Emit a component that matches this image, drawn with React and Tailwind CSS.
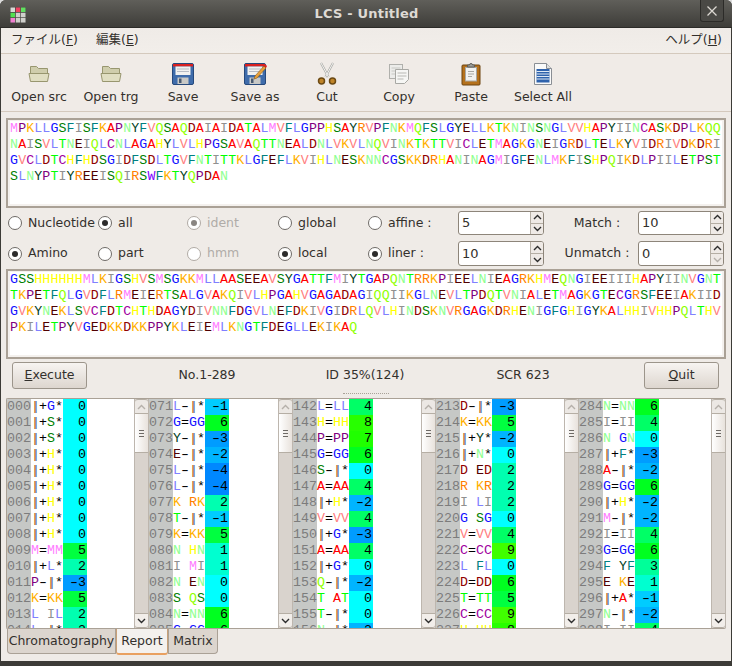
import React from "react";

const AA = {
  A: "text-[#ff0000]", C: "text-[#a000a0]", D: "text-[#900000]", E: "text-[#500000]",
  F: "text-[#008080]", G: "text-[#1010ff]", H: "text-[#ffff00]", I: "text-[#909090]",
  K: "text-[#ffb000]", L: "text-[#8080ff]", M: "text-[#ff80ff]", N: "text-[#90ff90]",
  P: "text-[#800080]", Q: "text-[#90ff00]", R: "text-[#ff8000]", S: "text-[#008000]",
  T: "text-[#00ff00]", V: "text-[#ff8080]", W: "text-[#8000ff]", Y: "text-[#004020]",
};

const SCORE = {
  "-4": "bg-[#0088ff]", "-3": "bg-[#009cff]", "-2": "bg-[#00b4ff]", "-1": "bg-[#00ccff]",
  0: "bg-[#00ffff]", 1: "bg-[#00ffd0]", 2: "bg-[#00ffb0]", 3: "bg-[#00ff99]", 4: "bg-[#00ff66]",
  5: "bg-[#00ff40]", 6: "bg-[#00ff20]", 7: "bg-[#20ff00]", 8: "bg-[#28ff00]", 9: "bg-[#40ff00]",
};

const SRC = [
  "MPKLLGSFISFKAPNYFVQSAQDAIAIDATALMVFLGPPHSAYRVPFNKMQFSLGYELLKTKNINSNGLVVHAPYIINCASKDPLKQQ",
  "NAISVLTNEIQLCNLAGAHYLVLHPGSAVAQTTNEALDNLVKVLNQVINKTKTTVICLETMAGKGNEIGRDLTELKYVIDRIVDKDRI",
  "GVCLDTCHFHDSGIDFSDLTGVFNTITTKLGFEFLKVIHLNESKNNCGSKKDRHANINAGMIGFENLMKFISHPQIKDLPIILETPST",
  "SLNYPTIYREEISQIRSWFKTYQPDAN",
];

const TRG = [
  "GSSHHHHHHMLKIGSHVSMSGKKMLLAASEEAVSYGATTFMIYTGAPQNTRRKPIEELNIEAGRKHMEQNGIEEIIIHAPYIINVGNT",
  "TKPETFQLGVDFLRMEIERTSALGVAKQIVLHPGAHVGAGADAGIQQIIKGLNEVLTPDQTVNIALETMAGKGTECGRSFEEIAKIID",
  "GVKYNEKLSVCFDTCHTHDAGYDIVNNFDGVLNEFDKIVGIDRLQVLHINDSKNVRGAGKDRHENIGFGHIGYKALHHIVHHPQLTHV",
  "PKILETPYVGEDKKDKKPPYKLEIEMLKNGTFDEGLLEKIKAQ",
];

const PANES = [
  { start: 0, w: "w-[142px]", rows: [["|+G*", 0], ["|+S*", 0], ["|+S*", 0], ["|+H*", 0], ["|+H*", 0], ["|+H*", 0], ["|+H*", 0], ["|+H*", 0], ["|+H*", 0], ["M=MM", 5], ["|+L*", 2], ["P-|*", -3], ["K=KK", 5], ["L IL", 2], ["L-|*", 2]] },
  { start: 71, w: "w-[144px]", rows: [["L-|*", -1], ["G=GG", 6], ["Y-|*", -3], ["E-|*", -2], ["L-|*", -4], ["L-|*", -4], ["K RK", 2], ["T-|*", -1], ["K=KK", 5], ["N HN", 1], ["I MI", 1], ["N EN", 0], ["S QS", 0], ["N=NN", 6], ["G=GG", 6]] },
  { start: 142, w: "w-[143px]", rows: [["L=LL", 4], ["H=HH", 8], ["P=PP", 7], ["G=GG", 6], ["S-|*", 0], ["A=AA", 4], ["|+H*", -2], ["V=VV", 4], ["|+G*", -3], ["A=AA", 4], ["|+G*", 0], ["Q-|*", -2], ["T AT", 0], ["T-|*", 0], ["N-|*", -2]] },
  { start: 213, w: "w-[143px]", rows: [["D-|*", -3], ["K=KK", 5], ["|+Y*", -2], ["|+N*", 0], ["D ED", 2], ["R KR", 2], ["I LI", 2], ["G SG", 0], ["V=VV", 4], ["C=CC", 9], ["L FL", 0], ["D=DD", 6], ["T=TT", 5], ["C=CC", 9], ["H=HH", 8]] },
  { start: 284, w: "flex-1", rows: [["N=NN", 6], ["I=II", 4], ["N GN", 0], ["|+F*", -3], ["A-|*", -2], ["G=GG", 6], ["|+H*", -2], ["M-|*", -2], ["I=II", 4], ["G=GG", 6], ["F YF", 3], ["E KE", 1], ["|+A*", -1], ["N-|*", -2], ["I=II", 4]] },
];

const MONO = "font-['Liberation_Mono',monospace] text-[13.3px]";

const Cell = ({ ch, w }) => {
  if (ch === "|") {
    return <span className={`inline-block text-center ${w} text-[#b4641e] [text-shadow:1px_0_0_#4a78a8]`}>{ch}</span>;
  }
  if (ch === "-") {
    return <span className={`inline-block text-center ${w} text-black scale-x-[1.5]`}>{ch}</span>;
  }
  return <span className={`inline-block text-center ${w} ${AA[ch] || "text-black"}`}>{ch}</span>;
};

const SeqBox = ({ lines }) => (
  <div className="ml-[5px] w-[720px] h-[90px] border-2 border-[#aaa196] bg-[#f4f1ee] px-[2px] pt-px pb-[2px]">
    <div className={`h-full bg-white ${MONO}`}>
      {lines.map((line, i) => (
        <div key={i} className="h-[16px] leading-[16px] whitespace-nowrap">
          {line.split("").map((ch, j) => <Cell key={j} ch={ch} w="w-[8.08px]" />)}
        </div>
      ))}
    </div>
  </div>
);

const Radio = ({ on, off, label, w }) => (
  <label className={`flex items-center gap-[6px] ${w}`}>
    <span className={`w-[14px] h-[14px] rounded-full border flex items-center justify-center bg-white ${off ? "border-[#b0aaa4]" : "border-[#6e6a66]"}`}>
      {on && <span className={`w-[6px] h-[6px] rounded-full ${off ? "bg-[#8a8682]" : "bg-[#2c2c2c]"}`} />}
    </span>
    <span className={off ? "text-[#b0aca8]" : "text-[#33302c]"}>{label}</span>
  </label>
);

const Chevron = ({ up, dim }) => (
  <svg width="9" height="6" viewBox="0 0 9 6" fill="none" stroke={dim ? "#b5b0aa" : "#2c2c2c"} strokeWidth="1.4">
    <path d={up ? "M1 5 L4.5 1.5 L8 5" : "M1 1 L4.5 4.5 L8 1"} />
  </svg>
);

const Spin = ({ value, h, downDim }) => (
  <div className={`w-[86px] ${h} flex border border-[#8d857a] rounded-[3px] bg-white overflow-hidden`}>
    <div className="flex-1 flex items-center pl-[3px] text-[13px] text-[#33302c]">{value}</div>
    <div className="w-[13px] flex flex-col border-l border-[#b5aea4] bg-[#efeae6]">
      <div className="flex-1 flex items-center justify-center border-b border-[#b5aea4]"><Chevron up /></div>
      <div className="flex-1 flex items-center justify-center"><Chevron dim={downDim} /></div>
    </div>
  </div>
);

const Button = ({ mn, rest }) => (
  <button className="w-[75px] h-[27px] border border-[#9c958b] rounded-[3px] bg-gradient-to-b from-[#f7f4f1] to-[#ddd6cf] text-[#33302c]">
    <span className="underline">{mn}</span>{rest}
  </button>
);

const Scrollbar = () => (
  <div className="w-[15px] shrink-0 flex flex-col bg-[#d9d3cd] border-x border-[#bdb6ae]">
    <div className="h-[15px] flex items-center justify-center bg-[#ece8e4] border-y border-[#b5aea4] rounded-t-[3px]"><Chevron up dim /></div>
    <div className="h-[39px] flex flex-col items-center justify-center gap-[2px] bg-gradient-to-r from-[#ffffff] to-[#e8e2dc] border-b border-[#b5aea4]">
      <span className="w-[5px] h-px bg-[#6e6a66]" />
      <span className="w-[5px] h-px bg-[#6e6a66]" />
      <span className="w-[5px] h-px bg-[#6e6a66]" />
    </div>
    <div className="flex-1" />
    <div className="h-[15px] flex items-center justify-center bg-[#f2eeea] border-y border-[#b5aea4] rounded-b-[3px]"><Chevron /></div>
  </div>
);

const Score = ({ value }) => (
  <span className={`w-[24px] flex justify-end pr-px text-black ${SCORE[value]}`}>
    {value < 0 && <span className="w-[8px] text-center scale-x-[1.5]">-</span>}
    <span>{Math.abs(value)}</span>
  </span>
);

const Pane = ({ start, rows, w }) => (
  <div className={`${w} flex overflow-hidden`}>
    <div className={`flex-1 min-w-0 bg-white overflow-hidden ${MONO}`}>
      {rows.map(([s, score], i) => (
        <div key={i} className="flex h-[16px] leading-[16px] whitespace-nowrap">
          <span className="w-[24px] bg-[#c6c8c6] text-[#7c7c7c]">{String(start + i).padStart(3, "0")}</span>
          <span className="w-[32px] flex">
            {s.split("").map((ch, j) => <Cell key={j} ch={ch} w="w-[8px]" />)}
          </span>
          <Score value={score} />
        </div>
      ))}
    </div>
    <Scrollbar />
  </div>
);

const Folder = () => (
  <svg width="24" height="24" viewBox="0 0 24 24">
    <path d="M3.500 4.500h6l2 2h9v8h-17z" fill="#cfcdac" stroke="#98966f" />
    <path d="M2 11.500h20l-1.500 8h-17z" fill="#e0dec2" stroke="#98966f" />
  </svg>
);

const Floppy = () => (
  <>
    <rect x="1.500" y="1.500" width="21" height="21" rx="1.500" fill="#3f6cab" stroke="#26497c" />
    <rect x="2" y="2" width="20" height="2.500" fill="#d92020" />
    <rect x="4.500" y="4.500" width="15" height="8.500" fill="#f2f2f0" />
    <path d="M6 7h12M6 9.500h12" stroke="#b8bcc4" />
    <rect x="6.500" y="15.500" width="11" height="6.500" fill="#c9c9c6" />
    <rect x="8" y="16.500" width="2.500" height="4.500" fill="#4a5a70" />
  </>
);

const ICONS = {
  folder: <Folder />,
  save: <svg width="24" height="24" viewBox="0 0 24 24"><Floppy /></svg>,
  saveas: (
    <svg width="24" height="24" viewBox="0 0 24 24">
      <Floppy />
      <path d="M12 14l9-10 2 2-9 10-3 1z" fill="#e8a13c" stroke="#8a5a14" strokeWidth="0.6" />
      <path d="M21 4l1.500-1.500 1.500 1.500-1 2z" fill="#d92020" />
    </svg>
  ),
  cut: (
    <svg width="24" height="24" viewBox="0 0 24 24">
      <path d="M6 1l7.500 14M18 1l-7.500 14" stroke="#a8a8a4" strokeWidth="2.200" fill="none" />
      <path d="M6 1l7.500 14M18 1l-7.500 14" stroke="#f4f4f2" strokeWidth="1" fill="none" />
      <circle cx="6.500" cy="19" r="3" fill="#c08428" stroke="#6c4a14" strokeWidth="1.500" />
      <circle cx="17.500" cy="19" r="3" fill="#c08428" stroke="#6c4a14" strokeWidth="1.500" />
    </svg>
  ),
  copy: (
    <svg width="24" height="24" viewBox="0 0 24 24">
      <rect x="2.500" y="2.500" width="13" height="14" fill="#ececea" stroke="#b0b0ac" />
      <path d="M4.500 6h9M4.500 9h9M4.500 12h9" stroke="#c8c8c4" />
      <path d="M8.500 7.500h13v10l-4 4h-9z" fill="#f6f6f4" stroke="#a8a8a4" />
      <path d="M10.500 11h9M10.500 14h9M10.500 17h6" stroke="#b8b8b4" />
    </svg>
  ),
  paste: (
    <svg width="24" height="24" viewBox="0 0 24 24">
      <rect x="3" y="3" width="18" height="20" rx="1" fill="#b5711c" stroke="#6c4410" />
      <rect x="6.500" y="5.500" width="11" height="13.500" fill="#f2f2f0" stroke="#a8a8a4" />
      <path d="M9 9.500h6M9 12h6M9 14.500h4" stroke="#a8a8a4" />
      <path d="M8.500 5V3h2a1.500 1.500 0 0 1 3 0h2v2z" fill="#a0a09c" stroke="#5c5c58" />
    </svg>
  ),
  select: (
    <svg width="24" height="24" viewBox="0 0 24 24">
      <path d="M3.500 1.500h12l5 5v16h-17z" fill="#fafafa" stroke="#8a8e94" />
      <path d="M15.500 1.500v5h5" fill="#dfe0e0" stroke="#8a8e94" />
      <rect x="5.500" y="7" width="13" height="13.500" fill="#2f62ac" />
      <path d="M5.500 9.500h13M5.500 12h13M5.500 14.500h13M5.500 17h13" stroke="#dfe8f4" />
    </svg>
  ),
};

const TOOLS = [
  ["folder", "Open src"], ["folder", "Open trg"], ["save", "Save"], ["saveas", "Save as"],
  ["cut", "Cut"], ["copy", "Copy"], ["paste", "Paste"], ["select", "Select All"],
];

const AppIcon = () => (
  <svg width="16" height="16" viewBox="0 0 16 16">
    <rect width="16" height="16" fill="#4a4a46" />
    <rect x="0.500" y="0.500" width="4.500" height="4.500" fill="#d8d8d4" />
    <rect x="5.800" y="0.500" width="4.500" height="4.500" fill="#f04060" />
    <rect x="11" y="0.500" width="4.500" height="4.500" fill="#60e060" />
    <rect x="0.500" y="5.800" width="4.500" height="4.500" fill="#50e050" />
    <rect x="5.800" y="5.800" width="4.500" height="4.500" fill="#cfcfcb" />
    <rect x="11" y="5.800" width="4.500" height="4.500" fill="#cfcfcb" />
    <rect x="0.500" y="11" width="4.500" height="4.500" fill="#f080d0" />
    <rect x="5.800" y="11" width="4.500" height="4.500" fill="#cfcfcb" />
    <rect x="11" y="11" width="4.500" height="4.500" fill="#cfcfcb" />
  </svg>
);

export default function App() {
  return (
    <div className="w-[732px] h-[666px] overflow-hidden bg-[#dcdcdc] text-[12.5px] text-[#33302c] font-['DejaVu_Sans','Noto_Sans_CJK_JP',sans-serif]">
      <div className="h-full flex flex-col rounded-t-[6px] overflow-hidden bg-[#3c3b37] px-px pb-[5px]">
        <div className="-mx-px h-[28px] shrink-0 relative flex items-center justify-center border-b border-[#2c2b28] bg-gradient-to-b from-[#605f5a] to-[#3e3d39] pl-px">
          <div className="absolute left-[10px] top-[7px]"><AppIcon /></div>
          <span className="font-bold text-[13px] tracking-[0.2px] text-[#dedad4]">LCS - Untitled</span>
          <div className="absolute left-[700px] top-0 w-[24px] h-[22px] border border-t-0 border-[#2c2b28] rounded-b-[3px] bg-[#4a4945] flex items-center justify-center">
            <svg width="10" height="10" viewBox="0 0 10 10" stroke="#dcd8d2" strokeWidth="1.300"><path d="M0.500 0.500L9.500 9.500M9.500 0.500L0.500 9.500" /></svg>
          </div>
        </div>

        <div className="flex-1 flex flex-col bg-[#efebe7]">
          <div className="h-[26px] shrink-0 flex items-center justify-between border-b border-[#d4c9bd] bg-gradient-to-b from-[#efebe7] to-[#f2eeea] pl-[10px] pr-[9px]">
            <div className="flex gap-[18px]">
              <span>ファイル(<span className="underline">F</span>)</span>
              <span>編集(<span className="underline">E</span>)</span>
            </div>
            <span>ヘルプ(<span className="underline">H</span>)</span>
          </div>

          <div className="h-[58px] shrink-0 flex pl-[2px] border-b border-[#d4c9bd] bg-[#f0ebe7]">
            {TOOLS.map(([icon, label]) => (
              <div key={label} className="w-[72px] flex flex-col items-center pt-[8px]">
                <div className="h-[24px]">{ICONS[icon]}</div>
                <span className="mt-[2px] leading-[18px] whitespace-nowrap">{label}</span>
              </div>
            ))}
          </div>

          <div className="mt-[6px]"><SeqBox lines={SRC} /></div>

          <div className="mt-[3px] h-[24px] flex items-center pl-[7px]">
            <Radio label="Nucleotide" w="w-[90px]" />
            <Radio label="all" on w="w-[89px]" />
            <Radio label="ident" on off w="w-[91px]" />
            <Radio label="global" w="w-[90px]" />
            <Radio label="affine :" w="w-[90px]" />
            <Spin value="5" h="h-[24px]" />
            <div className="w-[94px] pl-[12px] text-center">Match :</div>
            <Spin value="10" h="h-[24px]" />
          </div>
          <div className="mt-[6px] h-[25px] flex items-center pl-[7px]">
            <Radio label="Amino" on w="w-[90px]" />
            <Radio label="part" w="w-[89px]" />
            <Radio label="hmm" off w="w-[91px]" />
            <Radio label="local" on w="w-[90px]" />
            <Radio label="liner :" on w="w-[90px]" />
            <Spin value="10" h="h-[25px]" />
            <div className="w-[94px] pl-[12px] text-center whitespace-nowrap">Unmatch :</div>
            <Spin value="0" h="h-[25px]" downDim />
          </div>

          <div className="mt-[3px]"><SeqBox lines={TRG} /></div>

          <div className="mt-[3px] flex items-center pl-[11px]">
            <Button mn="E" rest="xecute" />
            <div className="ml-[41px] grid grid-cols-[158px_158px_158px] text-center">
              <span>No.1-289</span>
              <span>ID 35%(124)</span>
              <span>SCR 623</span>
            </div>
            <div className="ml-[42px]"><Button mn="Q" rest="uit" /></div>
          </div>

          <div className="h-[9px] flex items-center justify-center">
            <span className="w-[46px] h-[2px] border-t border-dotted border-[#a8a298]" />
          </div>

          <div className="ml-[5px] w-[720px] h-[231px] flex border-y border-l border-[#aaa196] rounded-[2px]">
            {PANES.map((p) => <Pane key={p.start} {...p} />)}
          </div>

          <div className="ml-[6px] flex h-[26px]">
            <div className="w-[109px] flex items-center justify-center border border-t-0 border-[#aaa196] rounded-bl-[4px] bg-[#dcd5ce] h-[25px]">Chromatography</div>
            <div className="w-[52px] flex items-center justify-center border-x border-b-2 border-x-[#c8a078] border-b-[#e9a060] rounded-b-[3px] bg-[#f4f1ee]">Report</div>
            <div className="w-[50px] flex items-center justify-center border border-t-0 border-[#aaa196] rounded-br-[4px] bg-[#dcd5ce] h-[25px]">Matrix</div>
          </div>
        </div>
      </div>
    </div>
  );
}
